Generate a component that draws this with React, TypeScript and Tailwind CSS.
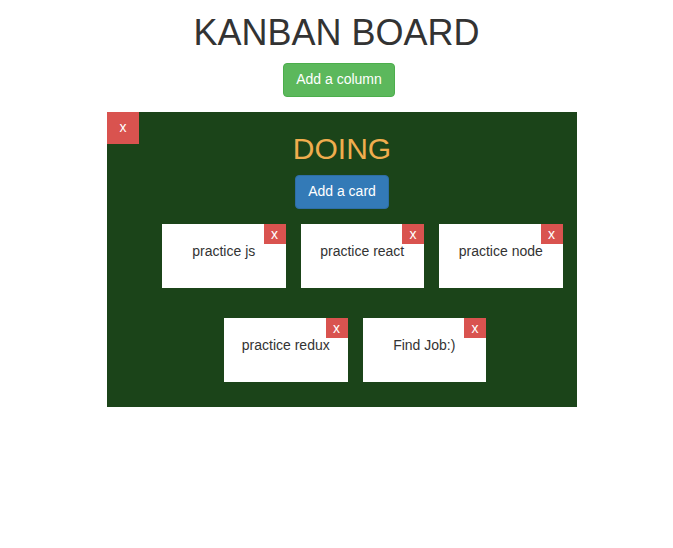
const cards = [
  ["practice js", "practice react", "practice node"],
  ["practice redux", "Find Job:)"],
];

const Card = ({ text }: { text: string }) => (
  <div className="relative w-[123.5px] h-16 bg-white text-center pt-[17px] text-[14px] leading-5 text-[#333]">
    <button className="absolute top-0 right-0 w-[22px] h-5 bg-[#d9534f] text-white text-[14px] leading-5">
      x
    </button>
    {text}
  </div>
);

const App = () => {
  return (
    <div className="w-[673px] h-[548px] bg-white font-['Liberation_Sans',Arial,sans-serif] text-[#333]">
      <h1 className="pt-[13px] mb-[10px] text-center text-[36px] leading-[1.1] text-[#333]">
        KANBAN BOARD
      </h1>
      <div className="flex justify-center">
        <button className="ml-[5px] h-[34px] px-3 rounded border border-[#4cae4c] bg-[#5cb85c] text-white text-[14px]">
          Add a column
        </button>
      </div>
      <div className="relative mt-[15px] ml-[107px] w-[470px] h-[295px] bg-[#1b4419]">
        <button className="absolute top-0 left-0 w-8 h-8 bg-[#d9534f] text-white text-[14px]">
          x
        </button>
        <h2 className="pt-5 mb-[10px] text-center text-[30px] leading-[1.1] text-[#f0ad4e]">
          DOING
        </h2>
        <div className="flex justify-center">
          <button className="h-[34px] px-3 rounded border border-[#2e6da4] bg-[#337ab7] text-white text-[14px]">
            Add a card
          </button>
        </div>
        <div className="mt-[15px] flex flex-col gap-[30px]">
          <div className="ml-[55px] flex gap-[15px]">
            {cards[0].map((c) => (
              <Card key={c} text={c} />
            ))}
          </div>
          <div className="ml-[117px] flex gap-[15px]">
            {cards[1].map((c) => (
              <Card key={c} text={c} />
            ))}
          </div>
        </div>
      </div>
    </div>
  );
};

export default App;
